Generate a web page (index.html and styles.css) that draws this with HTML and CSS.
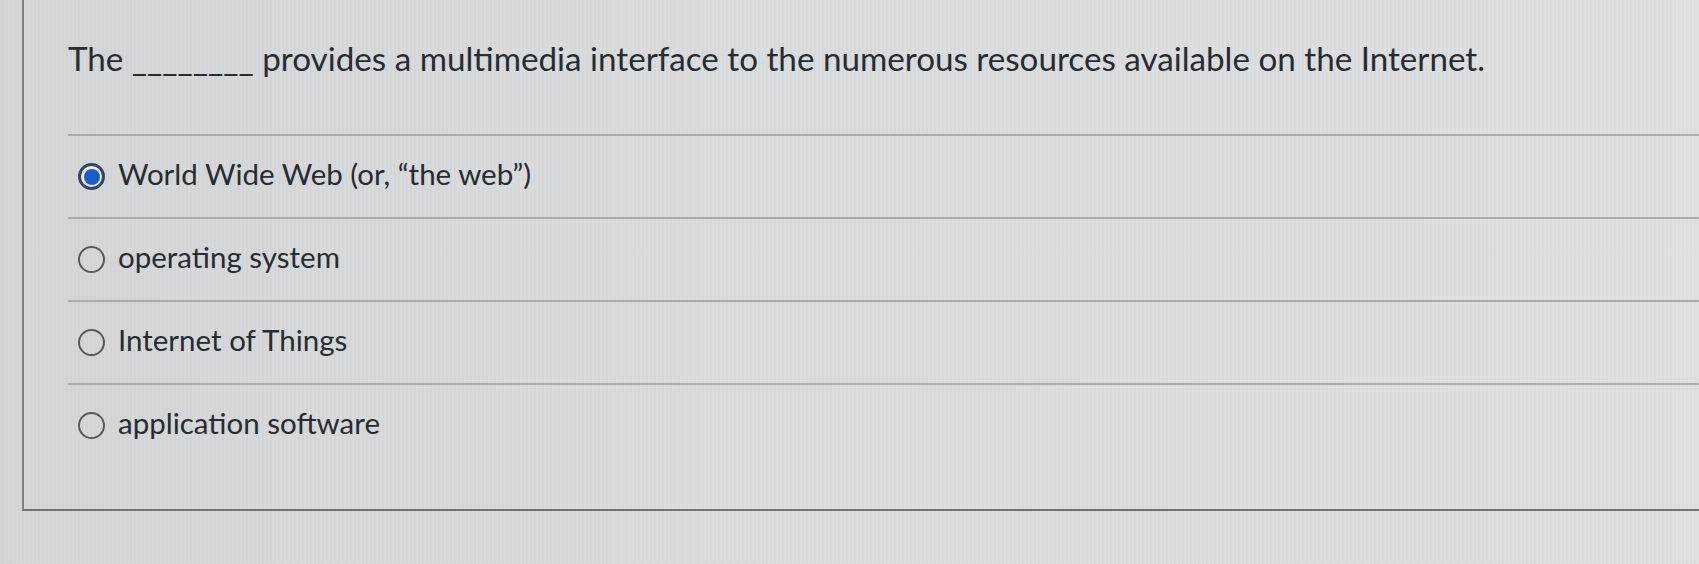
FILE: index.html
```html
<!DOCTYPE html>
<html lang="en">
<head>
<meta charset="utf-8">
<title>Quiz question</title>
<link rel="stylesheet" href="styles.css">
</head>
<body>
<div class="page">
  <section class="quiz-box">
    <p class="question">The <span class="blank">________</span> provides a multimedia interface to the numerous resources available on the Internet.</p>
    <ul class="answers">
      <li class="answer">
        <span class="radio radio-checked"><span class="dot"></span></span>
        <span class="label">World Wide Web (or, “the web”)</span>
      </li>
      <li class="answer">
        <span class="radio"></span>
        <span class="label">operating system</span>
      </li>
      <li class="answer">
        <span class="radio"></span>
        <span class="label">Internet of Things</span>
      </li>
      <li class="answer">
        <span class="radio"></span>
        <span class="label">application software</span>
      </li>
    </ul>
  </section>
</div>
</body>
</html>
```

FILE: styles.css
```css
html, body {
  margin: 0;
  padding: 0;
  height: 100%;
  overflow: hidden;
}

body {
  background:
    repeating-linear-gradient(90deg, rgba(255,255,255,0.03) 0 2px, rgba(0,0,0,0.012) 2px 4px),
    linear-gradient(90deg, #d3d5d6 0%, #d9dbdc 40%, #dddfe0 100%);
  font-family: Lato, "Noto Sans", sans-serif;
  color: #272c32;
}

.page {
  padding-left: 22px;
}

.quiz-box {
  width: 1720px;
  height: 511px;
  box-sizing: border-box;
  border-left: 2px solid #7c7f83;
  border-bottom: 2px solid #6f7276;
  padding-left: 44px;
}

.question {
  margin: 0;
  padding-top: 37px;
  font-size: 33.2px;
  line-height: 42px;
}

.blank {
  letter-spacing: 0;
}

.answers {
  list-style: none;
  margin: 55px 0 0 0;
  padding: 0;
}

.answer {
  display: flex;
  align-items: center;
  height: 83px;
  box-sizing: border-box;
  border-top: 2px solid #a9abad;
  padding-left: 10px;
  gap: 13px;
  font-size: 29.5px;
}

.radio {
  width: 27px;
  height: 27px;
  box-sizing: border-box;
  border: 2px solid #55595e;
  border-radius: 50%;
  flex: none;
  display: flex;
  align-items: center;
  justify-content: center;
}

.radio-checked {
  border: 3px solid #34446a;
  background: #e9eef5;
}

.radio-checked .dot {
  width: 16px;
  height: 16px;
  border-radius: 50%;
  background: #1d5cc8;
}

.label {
  line-height: 1;
  padding-bottom: 5px;
}
```
